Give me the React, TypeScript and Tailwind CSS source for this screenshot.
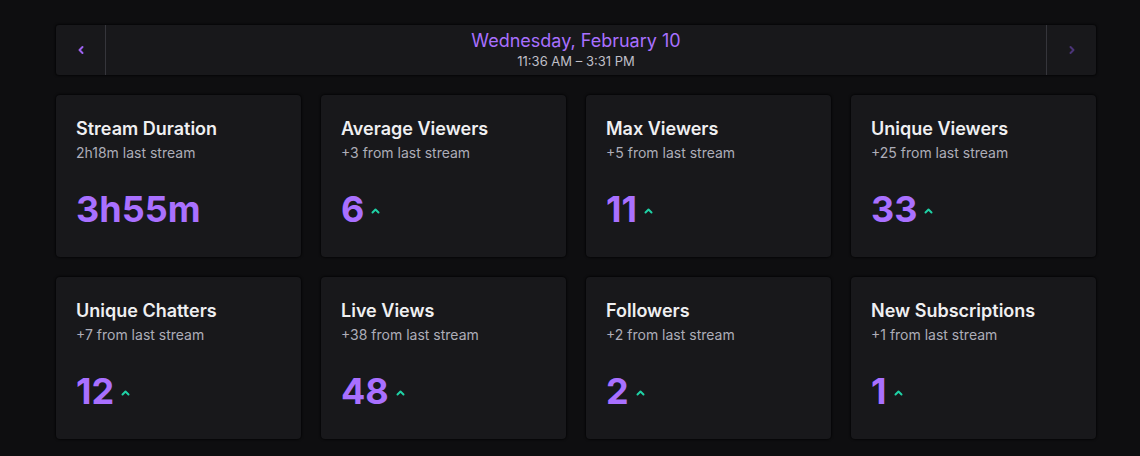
import React from 'react';

interface Stat {
  title: string;
  sub: string;
  value: string;
  up?: boolean;
}

const stats: Stat[] = [
  { title: 'Stream Duration', sub: '2h18m last stream', value: '3h55m' },
  { title: 'Average Viewers', sub: '+3 from last stream', value: '6', up: true },
  { title: 'Max Viewers', sub: '+5 from last stream', value: '11', up: true },
  { title: 'Unique Viewers', sub: '+25 from last stream', value: '33', up: true },
  { title: 'Unique Chatters', sub: '+7 from last stream', value: '12', up: true },
  { title: 'Live Views', sub: '+38 from last stream', value: '48', up: true },
  { title: 'Followers', sub: '+2 from last stream', value: '2', up: true },
  { title: 'New Subscriptions', sub: '+1 from last stream', value: '1', up: true },
];

function Caret() {
  return (
    <svg width="9" height="6" viewBox="0 0 9 6" className="ml-[7px] mt-[4px]">
      <polyline points="1.5,4.5 4.5,1.5 7.5,4.5" fill="none" stroke="#1fd1a5" strokeWidth="2" strokeLinecap="round" strokeLinejoin="round" />
    </svg>
  );
}

function Chevron({ dir, className }: { dir: 'left' | 'right'; className: string }) {
  return (
    <svg width="8" height="10" viewBox="0 0 8 10" className={className}>
      <polyline
        points={dir === 'left' ? '5.5,2 2.5,5 5.5,8' : '2.5,2 5.5,5 2.5,8'}
        fill="none"
        stroke="currentColor"
        strokeWidth="2"
        strokeLinecap="round"
        strokeLinejoin="round"
      />
    </svg>
  );
}

export default function App() {
  return (
    <div className="min-h-[456px] bg-[#0e0e10] pl-14 pr-11 pt-[25px]" style={{ fontFamily: 'Inter, "Noto Sans", sans-serif' }}>
      <div className="flex h-[50px] rounded-[3px] bg-[#18181b] shadow-[0_0_2px_1px_rgba(0,0,0,0.6)]">
        <button className="flex w-[50px] items-center justify-center border-r border-[#35353b]">
          <Chevron dir="left" className="text-[#9d62f0]" />
        </button>
        <div className="flex flex-1 flex-col items-center justify-center pb-[2px]">
          <div className="text-[18px] leading-6 text-[#a970ff]">Wednesday, February 10</div>
          <div className="text-[13px] leading-4 text-[#bfbfc7]">11:36 AM – 3:31 PM</div>
        </div>
        <button className="flex w-[50px] items-center justify-center border-l border-[#35353b]">
          <Chevron dir="right" className="text-[#4b3478]" />
        </button>
      </div>

      <div className="mt-5 grid grid-cols-4 gap-5">
        {stats.map((s) => (
          <div key={s.title} className="h-[162px] rounded-[4px] bg-[#18181b] px-5 pt-[22px] shadow-[0_0_2px_1px_rgba(0,0,0,0.6)]">
            <div className="text-[18px] font-semibold leading-6 text-[#efeff1]">{s.title}</div>
            <div className="mt-[2px] text-[14px] leading-5 text-[#adadb8]">{s.sub}</div>
            <div className="mt-[26px] flex items-center">
              <span className="text-[36px] font-bold leading-10 text-[#a970ff]">{s.value}</span>
              {s.up && <Caret />}
            </div>
          </div>
        ))}
      </div>
    </div>
  );
}
